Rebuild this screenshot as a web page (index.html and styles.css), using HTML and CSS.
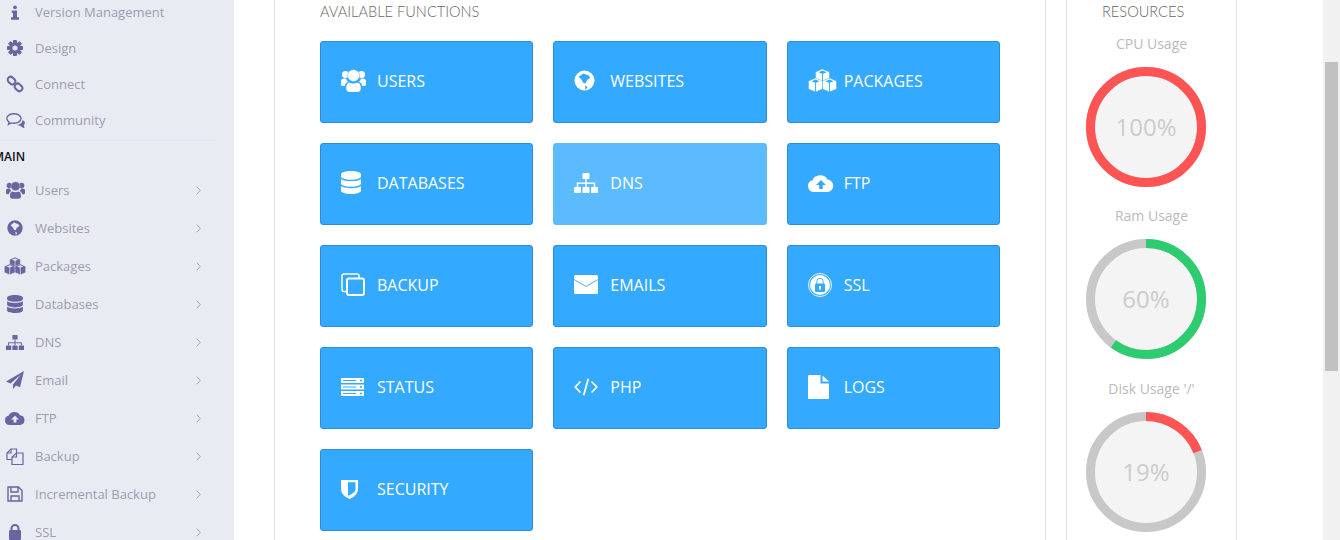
FILE: index.html
```html
<!DOCTYPE html>
<html>
<head>
  <meta charset="utf-8">
  <title>Dashboard</title>
  <link rel="stylesheet" href="styles.css">
</head>
<body>
  <!-- icon set -->
  <svg class="icon-defs" aria-hidden="true">
    <symbol id="i-info" viewBox="0 0 10 18"><circle cx="5" cy="2.5" r="2.4"/><path d="M1 6.5h6.5V15H10v3H0v-3h2.5V9.5H1z"/></symbol>
    <symbol id="i-cog" viewBox="0 0 24 24"><rect x="9" width="6" height="24" rx="1"/><rect x="9" width="6" height="24" rx="1" transform="rotate(45 12 12)"/><rect x="9" width="6" height="24" rx="1" transform="rotate(90 12 12)"/><rect x="9" width="6" height="24" rx="1" transform="rotate(135 12 12)"/><circle cx="12" cy="12" r="8.5"/><circle cx="12" cy="12" r="3.8" class="gap"/></symbol>
    <symbol id="i-link" viewBox="0 0 24 24"><g class="line" stroke-width="2.6"><rect x="1.800" y="3.500" width="11" height="8" rx="4" transform="rotate(45 7.300 7.500)"/><rect x="11.200" y="12.500" width="11" height="8" rx="4" transform="rotate(45 16.700 16.500)"/></g></symbol>
    <symbol id="i-comments" viewBox="0 0 24 19"><path class="line" stroke-width="1.700" d="M10 1c5 0 9 2.600 9 6s-4 6-9 6c-1 0-2-.1-3-.4L3 14.500l1-3.100C2.100 10.300 1 8.800 1 7c0-3.400 4-6 9-6z"/><path d="M21 9c1.900 1 3 2.300 3 3.800 0 1-.6 1.900-1.500 2.600l1 3.600c-2.500-.5-4.300-1.600-5.500-3-1.500 0-2.800-.3-4-.9 3.500-.3 6.800-2.400 7-6.100z"/></symbol>
    <symbol id="i-users" viewBox="0 0 25 23"><circle cx="4.500" cy="5.500" r="3.600"/><circle cx="20.500" cy="5.500" r="3.600"/><path d="M0 12c0-1.500 1.500-2.500 3-2.500h2c.5 1.500 1.200 2.500 2 3.200-1.500.8-3 2-3.200 4.300H1.500C.6 17 0 16.300 0 15.500zM25 12c0-1.500-1.500-2.500-3-2.500h-2c-.5 1.500-1.200 2.500-2 3.200 1.500.8 3 2 3.200 4.300h2.300c.9 0 1.500-.7 1.500-1.500z"/><circle class="gap-edge" cx="12.500" cy="6.500" r="6"/><path d="M8.500 13.500c1.200.8 2.500 1 4 1s2.800-.2 4-1c2 .5 3.200 2.200 3.200 4.500V20c0 1.800-1.500 3-3.200 3h-8c-1.700 0-3.200-1.200-3.200-3v-2c0-2.300 1.200-4 3.200-4.500z"/></symbol>
    <symbol id="i-globe" viewBox="0 0 24 24"><circle cx="12" cy="12" r="11.500"/><path class="gap" d="M5.400 7.700L10.500 3.900 17 6.200 18.600 8.900 14.700 11.600 13.200 15.500 10.500 14.700 8.500 10.800zM12.400 17.800L15.500 19.400 13.200 22.500z"/></symbol>
    <symbol id="i-cubes" viewBox="0 0 29 23"><g class="gap-edge"><path d="M14.500 0l7 3v8l-7 3-7-3V3z"/><path class="gap" d="M14.500 1.500l4 1.700-4 1.700-4-1.700z"/><path class="gap-line" d="M14.500 5v9"/></g><g class="gap-edge"><path d="M7.500 9l7 3v8l-7 3-7-3v-8z"/><path class="gap" d="M7.500 10.500l4 1.700-4 1.700-4-1.700z"/><path class="gap-line" d="M7.500 14v9"/></g><g class="gap-edge"><path d="M21.500 9l7 3v8l-7 3-7-3v-8z"/><path class="gap" d="M21.500 10.500l4 1.700-4 1.700-4-1.700z"/><path class="gap-line" d="M21.500 14v9"/></g></symbol>
    <symbol id="i-database" viewBox="0 0 448 512"><path d="M448 73.143v45.714C448 159.143 347.667 192 224 192S0 159.143 0 118.857V73.143C0 32.857 100.333 0 224 0s224 32.857 224 73.143zM448 176v102.857C448 319.143 347.667 352 224 352S0 319.143 0 278.857V176c48.125 33.143 136.208 48.572 224 48.572S399.874 209.143 448 176zm0 160v102.857C448 479.143 347.667 512 224 512S0 479.143 0 438.857V336c48.125 33.143 136.208 48.572 224 48.572S399.874 369.143 448 336z"/></symbol>
    <symbol id="i-sitemap" viewBox="0 0 24 20"><rect x="8.500" width="7" height="6" rx=".8"/><rect y="14" width="7" height="6" rx=".8"/><rect x="8.500" y="14" width="7" height="6" rx=".8"/><rect x="17" y="14" width="7" height="6" rx=".8"/><path class="line" stroke-width="1.400" d="M12 6v8M3.500 14v-3.700h17V14"/></symbol>
    <symbol id="i-plane" viewBox="0 0 18 18"><path d="M18 0L0 10.500l4.500 2L15 3.500 7 13.500V18l3-3.500 4 1.800z"/></symbol>
    <symbol id="i-cloud" viewBox="0 0 26 18"><path d="M6 18A6 6 0 0 1 4.500 6.200 8.500 8.500 0 0 1 19.500 5.500 6.300 6.300 0 0 1 20 18z"/><path class="gap" d="M13 6l-5 5h3.200v4h3.600v-4H18z"/></symbol>
    <symbol id="i-clone" viewBox="0 0 24 23"><g class="line"><rect x="6" y="5.500" width="17" height="16.500" rx="2" stroke-width="2"/><path stroke-width="1.500" d="M6 18.500H3a2 2 0 0 1-2-2V3a2 2 0 0 1 2-2h13a2 2 0 0 1 2 2v2.500"/></g></symbol>
    <symbol id="i-files" viewBox="0 0 18 17"><g class="line" stroke-width="1.200"><path d="M6 11.500H1V5l4-4h5.500v4"/><path d="M5 1v4H1"/><path d="M10.500 5H17v11.500H6V9z"/><path d="M10.500 5v4H6"/></g></symbol>
    <symbol id="i-floppy" viewBox="0 0 16 16"><g class="line" stroke-width="1.400"><path d="M1 1h10.500L15 4.500V15H1z"/><path d="M4 1v5h7V1M4 15v-5h8v5"/></g></symbol>
    <symbol id="i-lock" viewBox="0 0 12 16"><rect y="6" width="12" height="10" rx="1.200"/><path class="line" stroke-width="2" d="M2.500 7V4.500a3.500 3.500 0 0 1 7 0V7"/></symbol>
    <symbol id="i-mail" viewBox="0 0 24 19"><rect width="24" height="19" rx="1.500"/><path class="gap-line" stroke-width="1.200" d="M0 4.500l12 7 12-7"/></symbol>
    <symbol id="i-ssl" viewBox="0 0 24 24"><circle cx="12" cy="12" r="11.500" class="line" stroke-width=".9"/><circle cx="12" cy="12" r="10"/><rect x="7" y="10.500" width="10" height="8.500" rx=".8" class="gap"/><path class="gap-line" stroke-width="1.600" d="M8.800 11V8.500a3.200 3.200 0 0 1 6.400 0V11"/><path d="M11 13h2v1.800l-.4 2.200h-1.200l-.4-2.200z"/></symbol>
    <symbol id="i-server" viewBox="0 0 23 18"><rect width="23" height="5"/><rect y="6.500" width="23" height="5"/><rect y="13" width="23" height="5"/><g class="gap"><circle cx="20" cy="2.500" r="1"/><circle cx="20" cy="9" r="1"/><circle cx="20" cy="15.500" r="1"/><rect x="2" y="2" width="13" height="1"/><rect x="2" y="8.500" width="13" height="1"/><rect x="2" y="15" width="13" height="1"/></g></symbol>
    <symbol id="i-code" viewBox="0 0 24 18"><path class="line" stroke-width="1.800" d="M6.500 3.500L1.200 9l5.300 5.500M17.500 3.500L22.800 9l-5.300 5.500M14.300 .8L9.700 17.200"/></symbol>
    <symbol id="i-file" viewBox="0 0 21 24"><path d="M1 0h11.500v8.500H21V23a1 1 0 0 1-1 1H1a1 1 0 0 1-1-1V1a1 1 0 0 1 1-1z"/><path d="M14.500 .5L21 6.500h-6.500z"/></symbol>
    <symbol id="i-shield" viewBox="0 0 17 20"><path d="M0 1h17v9c0 5-4.500 8.500-8.500 10C4.500 18.500 0 15 0 10z"/><path class="gap" d="M7 3.200h7.500V10c0 3-3.500 5-7.500 6.800z"/></symbol>
    <symbol id="i-chevron" viewBox="0 0 5 9"><path class="line" stroke-width="1" d="M.7 .7L4.300 4.500.7 8.300"/></symbol>
  </svg>

  <div class="page">
    <nav class="sidebar">
      <ul class="nav nav-top">
        <li><span class="nav-icon"><svg width="8" height="15"><use href="#i-info"/></svg></span>Version Management</li>
        <li><span class="nav-icon"><svg width="16" height="16"><use href="#i-cog"/></svg></span>Design</li>
        <li><span class="nav-icon"><svg width="18" height="18"><use href="#i-link"/></svg></span>Connect</li>
        <li><span class="nav-icon"><svg width="19" height="15"><use href="#i-comments"/></svg></span>Community</li>
      </ul>
      <div class="nav-divider"></div>
      <div class="nav-title">MAIN</div>
      <ul class="nav nav-main">
        <li><span class="nav-icon"><svg width="19" height="18"><use href="#i-users"/></svg></span>Users<svg class="chevron" width="5" height="9"><use href="#i-chevron"/></svg></li>
        <li><span class="nav-icon"><svg width="16" height="16"><use href="#i-globe"/></svg></span>Websites<svg class="chevron" width="5" height="9"><use href="#i-chevron"/></svg></li>
        <li><span class="nav-icon"><svg width="22" height="18"><use href="#i-cubes"/></svg></span>Packages<svg class="chevron" width="5" height="9"><use href="#i-chevron"/></svg></li>
        <li><span class="nav-icon"><svg width="16" height="18"><use href="#i-database"/></svg></span>Databases<svg class="chevron" width="5" height="9"><use href="#i-chevron"/></svg></li>
        <li><span class="nav-icon"><svg width="18" height="15"><use href="#i-sitemap"/></svg></span>DNS<svg class="chevron" width="5" height="9"><use href="#i-chevron"/></svg></li>
        <li><span class="nav-icon"><svg width="18" height="18"><use href="#i-plane"/></svg></span>Email<svg class="chevron" width="5" height="9"><use href="#i-chevron"/></svg></li>
        <li><span class="nav-icon"><svg width="20" height="14"><use href="#i-cloud"/></svg></span>FTP<svg class="chevron" width="5" height="9"><use href="#i-chevron"/></svg></li>
        <li><span class="nav-icon"><svg width="18" height="17"><use href="#i-files"/></svg></span>Backup<svg class="chevron" width="5" height="9"><use href="#i-chevron"/></svg></li>
        <li><span class="nav-icon"><svg width="16" height="16"><use href="#i-floppy"/></svg></span>Incremental Backup<svg class="chevron" width="5" height="9"><use href="#i-chevron"/></svg></li>
        <li><span class="nav-icon"><svg width="12" height="16"><use href="#i-lock"/></svg></span>SSL<svg class="chevron" width="5" height="9"><use href="#i-chevron"/></svg></li>
      </ul>
    </nav>

    <main class="content">
      <section class="panel panel-functions">
        <h3 class="panel-title">AVAILABLE FUNCTIONS</h3>
        <div class="cards">
          <a class="card"><span class="card-icon"><svg width="25" height="23"><use href="#i-users"/></svg></span>USERS</a>
          <a class="card"><span class="card-icon"><svg width="21" height="21"><use href="#i-globe"/></svg></span>WEBSITES</a>
          <a class="card"><span class="card-icon"><svg width="29" height="23"><use href="#i-cubes"/></svg></span>PACKAGES</a>
          <a class="card"><span class="card-icon"><svg width="20" height="23"><use href="#i-database"/></svg></span>DATABASES</a>
          <a class="card card-hover"><span class="card-icon"><svg width="24" height="20"><use href="#i-sitemap"/></svg></span>DNS</a>
          <a class="card"><span class="card-icon"><svg width="26" height="18"><use href="#i-cloud"/></svg></span>FTP</a>
          <a class="card"><span class="card-icon"><svg width="24" height="23"><use href="#i-clone"/></svg></span>BACKUP</a>
          <a class="card"><span class="card-icon"><svg width="24" height="19"><use href="#i-mail"/></svg></span>EMAILS</a>
          <a class="card"><span class="card-icon"><svg width="24" height="24"><use href="#i-ssl"/></svg></span>SSL</a>
          <a class="card"><span class="card-icon"><svg width="23" height="18"><use href="#i-server"/></svg></span>STATUS</a>
          <a class="card"><span class="card-icon"><svg width="24" height="18"><use href="#i-code"/></svg></span>PHP</a>
          <a class="card"><span class="card-icon"><svg width="21" height="24"><use href="#i-file"/></svg></span>LOGS</a>
          <a class="card"><span class="card-icon"><svg width="17" height="20"><use href="#i-shield"/></svg></span>SECURITY</a>
        </div>
      </section>

      <aside class="panel panel-resources">
        <h3 class="panel-title">RESOURCES</h3>
        <div class="gauge">
          <div class="gauge-label">CPU Usage</div>
          <svg class="gauge-ring" width="120" height="120" viewBox="0 0 120 120">
            <circle class="ring-bg" cx="60" cy="60" r="55.500"/>
            <circle class="ring-val ring-red" cx="60" cy="60" r="55.500" pathLength="100" stroke-dasharray="100 100" transform="rotate(-90 60 60)"/>
            <text class="gauge-text" x="60" y="69">100%</text>
          </svg>
        </div>
        <div class="gauge">
          <div class="gauge-label">Ram Usage</div>
          <svg class="gauge-ring" width="120" height="120" viewBox="0 0 120 120">
            <circle class="ring-bg" cx="60" cy="60" r="55.500"/>
            <circle class="ring-val ring-green" cx="60" cy="60" r="55.500" pathLength="100" stroke-dasharray="60 100" transform="rotate(-90 60 60)"/>
            <text class="gauge-text" x="60" y="69">60%</text>
          </svg>
        </div>
        <div class="gauge">
          <div class="gauge-label">Disk Usage '/'</div>
          <svg class="gauge-ring" width="120" height="120" viewBox="0 0 120 120">
            <circle class="ring-bg" cx="60" cy="60" r="55.500"/>
            <circle class="ring-val ring-red" cx="60" cy="60" r="55.500" pathLength="100" stroke-dasharray="19 100" transform="rotate(-90 60 60)"/>
            <text class="gauge-text" x="60" y="69">19%</text>
          </svg>
        </div>
      </aside>
    </main>

    <div class="scrollbar"><div class="scrollbar-thumb"></div></div>
  </div>
</body>
</html>
```

FILE: styles.css
```css
* {
  box-sizing: border-box;
}

html, body {
  margin: 0;
  height: 540px;
  overflow: hidden;
  background-color: white;
  font-family: "Open Sans", "Liberation Sans", sans-serif;
}

.icon-defs {
  display: none;
}

/* shared icon parts */
svg {
  fill: currentColor;
  flex-shrink: 0;
}

.gap {
  fill: var(--gap);
  stroke: none;
}

.gap-edge {
  stroke: var(--gap);
  stroke-width: 0.5;
}

.line {
  fill: none;
  stroke: currentColor;
}

.gap-line {
  fill: none;
  stroke: var(--gap);
  stroke-width: 0.9;
}

.page {
  display: flex;
  height: 540px;
}

/* sidebar */
.sidebar {
  --gap: #e9ebf3;
  width: 234px;
  flex-shrink: 0;
  background-color: #e9ebf3;
  color: #9b9dae;
  font-size: 13px;
}

.nav {
  list-style: none;
  margin: 0;
  padding: 0;
}

.nav li {
  display: flex;
  align-items: center;
  padding-left: 5px;
}

.nav-top {
  margin-top: -6px;
}

.nav-top li {
  height: 36px;
}

.nav-main li {
  height: 38px;
}

.nav-icon {
  display: flex;
  align-items: center;
  justify-content: center;
  width: 20px;
  margin-right: 10px;
  color: #6a65a0;
}

.chevron {
  margin-left: auto;
  margin-right: 33px;
  color: #a3a5b6;
}

.nav-divider {
  height: 1px;
  margin: 2px 18px 0 0;
  background-color: #e3e5ef;
}

.nav-title {
  height: 30px;
  line-height: 32px;
  margin-left: -7px;
  font-size: 12px;
  font-weight: 600;
  color: #111;
}

/* main area */
.content {
  display: flex;
  flex: 1;
  gap: 20px;
  padding-left: 40px;
}

.panel {
  height: 540px;
  border-left: 1px solid #e3e3e3;
  border-right: 1px solid #e3e3e3;
}

.panel-functions {
  width: 772px;
  padding: 0 45px;
}

.panel-resources {
  width: 171px;
  padding: 0 19px;
}

.panel-title {
  margin: 0;
  height: 41px;
  padding-top: 3px;
  line-height: 18px;
  font-family: Lato, "Liberation Sans", sans-serif;
  font-size: 14.6px;
  font-weight: 300;
  color: #666;
}

.panel-resources .panel-title {
  height: 30px;
  padding-left: 16px;
}

/* function cards */
.cards {
  display: grid;
  grid-template-columns: repeat(3, 1fr);
  grid-auto-rows: 82px;
  gap: 20px;
}

.card {
  --gap: #33a9ff;
  display: flex;
  align-items: center;
  padding: 0 0 3px 20px;
  background-color: #33a9ff;
  border: 1px solid #2a8edb;
  border-radius: 3px;
  color: white;
  font-size: 16px;
}

.card-hover {
  --gap: #5cbaff;
  background-color: #5cbaff;
  border-color: #5cbaff;
}

.card-icon {
  display: flex;
  align-items: center;
  width: 36px;
  flex-shrink: 0;
}

/* gauges */
.gauge {
  height: 172.4px;
  padding-top: 3px;
}

.gauge-label {
  width: 120px;
  height: 22px;
  padding-left: 11px;
  text-align: center;
  white-space: nowrap;
  font-size: 14px;
  line-height: 22px;
  color: #bbb;
}

.gauge-ring {
  display: block;
  margin-top: 12px;
}

.ring-bg {
  fill: #f4f4f4;
  stroke: #c8c8c8;
  stroke-width: 9;
}

.ring-val {
  fill: none;
  stroke-width: 9;
}

.ring-red {
  stroke: #ff5454;
}

.ring-green {
  stroke: #2ecc71;
}

.gauge-text {
  fill: #ccc;
  font-size: 24px;
  text-anchor: middle;
}

/* page scrollbar */
.scrollbar {
  width: 17px;
  height: 540px;
  margin-left: auto;
  padding: 62px 2px 0;
  background-color: #f1f1f1;
}

.scrollbar-thumb {
  height: 309px;
  background-color: #c1c1c1;
}
```
